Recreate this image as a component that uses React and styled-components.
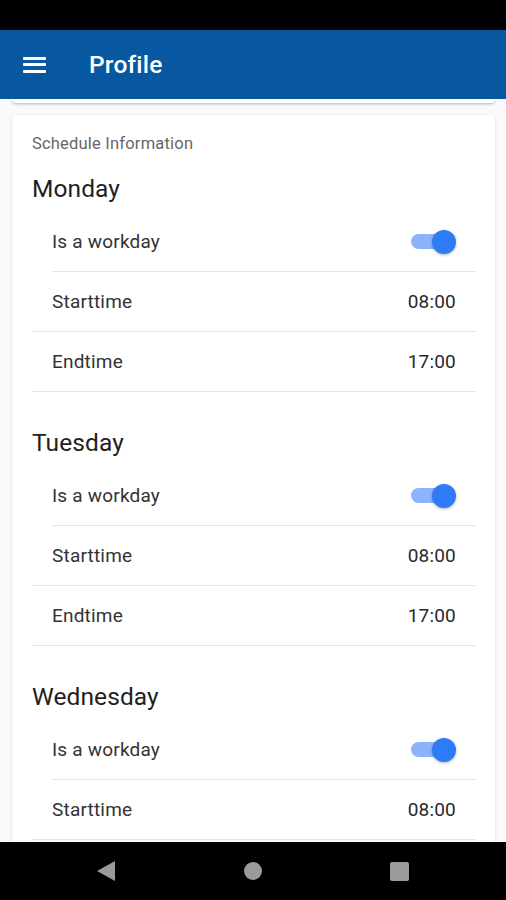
import React from "react";
import styled, { createGlobalStyle } from "styled-components";

const GlobalStyle = createGlobalStyle`
  html, body {
    margin: 0;
    padding: 0;
    background: #fafafa;
    font-family: Roboto, "Noto Sans", "Liberation Sans", sans-serif;
  }
  * {
    box-sizing: border-box;
  }
`;

const Screen = styled.div`
  width: 506px;
  height: 900px;
  display: flex;
  flex-direction: column;
  overflow: hidden;
  background: #fafafa;
`;

const StatusBar = styled.div`
  height: 30px;
  flex-shrink: 0;
  background: #000;
`;

const AppBar = styled.header`
  height: 69px;
  flex-shrink: 0;
  display: flex;
  align-items: center;
  gap: 43px;
  padding-left: 23px;
  background: #0757a1;
  position: relative;
  z-index: 2;
`;

const Hamburger = styled.div`
  width: 23px;
  display: flex;
  flex-direction: column;
  gap: 3.5px;

  span {
    height: 3px;
    background: #fff;
    border-radius: 1px;
  }
`;

const Title = styled.h1`
  margin: 0;
  color: #fff;
  font-size: 24.5px;
  font-weight: 500;
  letter-spacing: 0.2px;
`;

const Content = styled.main`
  flex: 1;
  overflow: hidden;
  display: flex;
  flex-direction: column;
  padding: 0 11px 0 12px;
`;

const CardTail = styled.div`
  height: 4px;
  flex-shrink: 0;
  background: #fff;
  border-radius: 0 0 4px 4px;
  box-shadow: 0 1px 3px rgba(0, 0, 0, 0.28);
`;

const Card = styled.section`
  flex-shrink: 0;
  margin-top: 12px;
  padding: 19px 19px 20px 20px;
  background: #fff;
  border-radius: 4px;
  box-shadow: 0 1px 3px rgba(0, 0, 0, 0.14);
`;

const CardHeader = styled.div`
  font-size: 16.5px;
  line-height: 20px;
  letter-spacing: 0.2px;
  color: #666;
`;

const DayTitle = styled.h2`
  margin: ${(p) => (p.$first ? "20px" : "36px")} 0 8px;
  font-size: 24.5px;
  line-height: 30px;
  font-weight: 400;
  letter-spacing: 0.1px;
  color: #1f1f1f;
`;

const Row = styled.div`
  height: 60px;
  display: flex;
  align-items: center;
  justify-content: space-between;
  margin-left: ${(p) => (p.$inset ? "20px" : "0")};
  padding: 0 20px 0 ${(p) => (p.$inset ? "0" : "20px")};
  border-bottom: 1.5px solid #e4e4e4;
  font-size: 19px;
  letter-spacing: 0.2px;
  color: #333;
`;

const Value = styled.span`
  color: #2a2a2a;
`;

const SwitchTrack = styled.span`
  position: relative;
  width: 45px;
  height: 24px;
  display: flex;
  align-items: center;

  &::before {
    content: "";
    width: 36px;
    height: 15px;
    border-radius: 8px;
    background: #8db4fa;
  }
`;

const SwitchThumb = styled.span`
  position: absolute;
  right: 0;
  top: 0;
  width: 24px;
  height: 24px;
  border-radius: 50%;
  background: #2d7bf6;
  box-shadow: 0 1px 3px rgba(0, 0, 0, 0.3);
`;

const NavBar = styled.nav`
  height: 58px;
  flex-shrink: 0;
  display: flex;
  align-items: center;
  justify-content: space-between;
  padding: 0 97px 0 97px;
  background: #000;
`;

const NavBack = styled.span`
  width: 0;
  height: 0;
  border-top: 10.5px solid transparent;
  border-bottom: 10.5px solid transparent;
  border-right: 18px solid #9a9a9a;
`;

const NavHome = styled.span`
  width: 18px;
  height: 18px;
  border-radius: 50%;
  background: #9a9a9a;
`;

const NavRecent = styled.span`
  width: 19px;
  height: 19px;
  border-radius: 2px;
  background: #9a9a9a;
`;

const days = [
  { name: "Monday", start: "08:00", end: "17:00" },
  { name: "Tuesday", start: "08:00", end: "17:00" },
  { name: "Wednesday", start: "08:00", end: "17:00" },
];

function Switch() {
  return (
    <SwitchTrack role="switch" aria-checked="true">
      <SwitchThumb />
    </SwitchTrack>
  );
}

function DayBlock({ day, first }) {
  return (
    <div>
      <DayTitle $first={first}>{day.name}</DayTitle>
      <Row $inset>
        <span>Is a workday</span>
        <Switch />
      </Row>
      <Row>
        <span>Starttime</span>
        <Value>{day.start}</Value>
      </Row>
      <Row>
        <span>Endtime</span>
        <Value>{day.end}</Value>
      </Row>
    </div>
  );
}

export default function App() {
  return (
    <>
      <GlobalStyle />
      <Screen>
        <StatusBar />
        <AppBar>
          <Hamburger>
            <span />
            <span />
            <span />
          </Hamburger>
          <Title>Profile</Title>
        </AppBar>
        <Content>
          <CardTail />
          <Card>
            <CardHeader>Schedule Information</CardHeader>
            {days.map((d, i) => (
              <DayBlock key={d.name} day={d} first={i === 0} />
            ))}
          </Card>
        </Content>
        <NavBar>
          <NavBack />
          <NavHome />
          <NavRecent />
        </NavBar>
      </Screen>
    </>
  );
}
